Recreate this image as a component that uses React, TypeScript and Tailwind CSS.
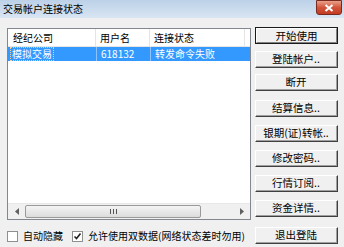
import React from 'react';

const font = { fontFamily: '"Noto Sans CJK SC", "Liberation Sans", sans-serif' };

const buttons = [
  { label: '开始使用', mt: 'mt-0', def: true },
  { label: '登陆帐户..', mt: 'mt-[7px]' },
  { label: '断开', mt: 'mt-[6px]' },
  { label: '结算信息..', mt: 'mt-[9px]' },
  { label: '银期(证)转帐..', mt: 'mt-[8px]' },
  { label: '修改密码..', mt: 'mt-[8px]' },
  { label: '行情订阅..', mt: 'mt-[8px]' },
  { label: '资金详情..', mt: 'mt-[8px]' },
];

const WinButton: React.FC<{ label: string; def?: boolean; className?: string }> = ({ label, def, className }) => (
  <div
    className={`h-[17px] w-[83px] shrink-0 flex items-center justify-center bg-[#f0f0f0] text-[10.5px] leading-[12px] text-black whitespace-nowrap ${
      def ? 'border border-[#1a1a1a]' : 'border-t border-l border-t-white border-l-white border-r border-b border-r-[#404040] border-b-[#404040]'
    } ${className ?? ''}`}
  >
    <div
      className={`w-full h-full flex items-center justify-center ${
        def ? 'border-t border-l border-t-white border-l-white border-r border-b border-r-[#808080] border-b-[#808080]' : 'border-r border-b border-r-[#a0a0a0] border-b-[#a0a0a0]'
      }`}
    >
      {label}
    </div>
  </div>
);

const Checkbox: React.FC<{ checked?: boolean }> = ({ checked }) => (
  <div className="w-[11px] h-[11px] shrink-0 border border-[#8f8f8f] bg-white flex items-center justify-center">
    {checked && (
      <svg width="9" height="9" viewBox="0 0 9 9">
        <path d="M1.5 4.5 L3.5 6.5 L7.5 1.5" stroke="#222" strokeWidth="1.6" fill="none" />
      </svg>
    )}
  </div>
);

export default function App() {
  return (
    <div className="w-[344px] h-[247px] bg-[#f0f0f0] overflow-hidden flex flex-col" style={font}>
      {/* title bar */}
      <div className="h-[18px] shrink-0 flex items-center justify-between bg-gradient-to-b from-[#bcd1e8] to-[#d9e5f2] pl-[3px] pr-[2px]">
        <span className="text-[10px] leading-[12px] text-black">交易帐户连接状态</span>
        <div className="w-[26px] h-[15px] -mt-[3px] rounded-b-[3px] border border-[#7a2a1c] bg-gradient-to-b from-[#e8a08a] via-[#d2543a] to-[#c23c22] flex items-center justify-center">
          <svg width="10" height="8" viewBox="0 0 10 8">
            <path d="M1.5 1 L8.5 7 M8.5 1 L1.5 7" stroke="white" strokeWidth="2" />
          </svg>
        </div>
      </div>

      <div className="flex pt-[9px] pl-[7px]">
        {/* left column */}
        <div className="w-[244px] flex flex-col">
          <div className="mt-px h-[192px] shrink-0 border border-[#828790] bg-white flex flex-col">
            <div className="h-[18px] shrink-0 flex text-[10px] leading-[12px] text-black border-b border-[#e5e5e5]">
              <div className="w-[88px] flex items-center pl-[5px] border-r border-[#e5e5e5]">经纪公司</div>
              <div className="w-[54px] flex items-center pl-[4px] border-r border-[#e5e5e5]">用户名</div>
              <div className="w-[95px] flex items-center pl-[4px] border-r border-[#e5e5e5]">连接状态</div>
            </div>
            <div className="h-[14px] shrink-0 flex bg-[#3399ff] text-[10px] leading-[12px] text-white">
              <div className="w-[88px] flex items-center pl-[3px]">
                <span className="outline-1 outline-dotted outline-[#ffcc88] px-px">模拟交易</span>
              </div>
              <div className="w-[54px] flex items-center pl-[4px] border-l border-[#8cc4ff]">618132</div>
              <div className="w-[95px] flex items-center pl-[4px] border-l border-[#8cc4ff]">转发命令失败</div>
            </div>
            <div className="flex-1" />
            {/* horizontal scrollbar */}
            <div className="h-[16px] shrink-0 flex items-center bg-[#f0f0f0] border-t border-[#e8e8e8]">
              <div className="w-[17px] flex items-center justify-center">
                <svg width="4" height="7" viewBox="0 0 4 7"><path d="M4 0 L0 3.5 L4 7 Z" fill="#606060" /></svg>
              </div>
              <div className="w-[176px] h-[13px] rounded-[2px] border border-[#9a9a9a] bg-gradient-to-b from-[#f4f4f4] to-[#dcdcdc] flex items-center justify-center">
                <svg width="7" height="5" viewBox="0 0 7 5">
                  <path d="M0.5 0 V5 M3.5 0 V5 M6.5 0 V5" stroke="#555" strokeWidth="1" />
                </svg>
              </div>
              <div className="flex-1" />
              <div className="w-[17px] flex items-center justify-center">
                <svg width="4" height="7" viewBox="0 0 4 7"><path d="M0 0 L4 3.5 L0 7 Z" fill="#606060" /></svg>
              </div>
            </div>
          </div>
          {/* checkboxes */}
          <div className="mt-[10px] flex items-center text-[10px] leading-[12px] text-black whitespace-nowrap">
            <Checkbox />
            <span className="ml-[5px]">自动隐藏</span>
            <div className="ml-[9px]"><Checkbox checked /></div>
            <span className="ml-[5px]">允许使用双数据(网络状态差时勿用)</span>
          </div>
        </div>

        {/* right column */}
        <div className="ml-[4px] flex flex-col">
          {buttons.map((b) => (
            <WinButton key={b.label} label={b.label} def={b.def} className={b.mt} />
          ))}
          <WinButton label="退出登陆" className="mt-[10px]" />
        </div>
      </div>
    </div>
  );
}
